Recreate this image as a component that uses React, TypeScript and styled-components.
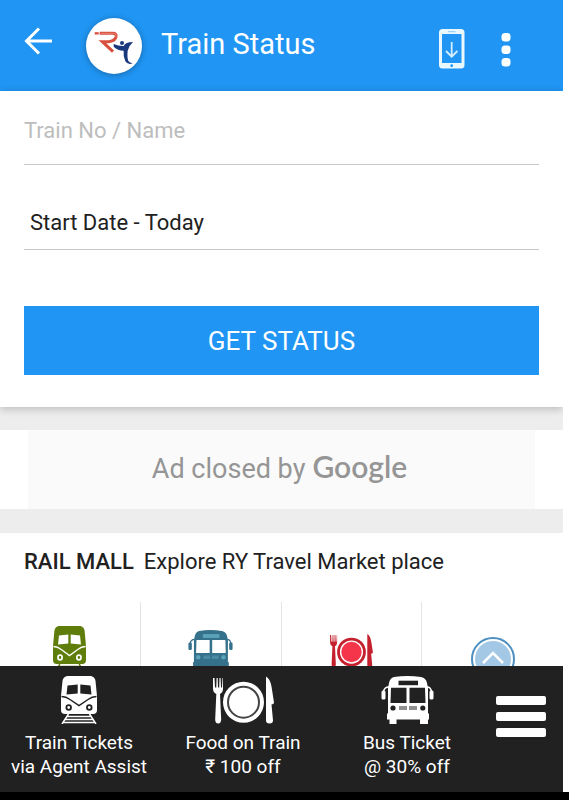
import React from "react";
import styled, { createGlobalStyle } from "styled-components";

const blue = "#2095f3";
const dark = "#212121";

const GlobalStyle = createGlobalStyle`
  *, *::before, *::after { box-sizing: border-box; }
  body { margin: 0; background: #fff; font-family: Roboto, sans-serif; color: #212121; }
  button, input, select { font: inherit; color: inherit; border: 0; margin: 0; padding: 0; background: none; border-radius: 0; }
  svg { display: block; flex: none; }
`;

const Screen = styled.div`
  display: flex;
  flex-direction: column;
  height: 100vh;
  overflow: hidden;
`;

const Viewport = styled.div`
  flex: 1;
  min-height: 0;
  display: flex;
  flex-direction: column;
  margin-right: 6px;
`;

const SystemBar = styled.div`
  height: 8px;
  background: #000;
`;

const Scroller = styled.main`
  position: relative;
  flex: 1;
  min-height: 0;
  overflow: hidden;
  background: #ededed;
`;

const Header = styled.header`
  display: flex;
  align-items: center;
  height: 91px;
  padding: 0 52px 0 24px;
  background: ${blue};
  color: #fff;
`;

const BackButton = styled.button`
  padding-bottom: 10px;
`;

const Logo = styled.div`
  width: 56px;
  height: 56px;
  margin: 0 19px 0 34px;
  border-radius: 50%;
  background: #fff;
  box-shadow: 0 1px 6px rgba(0, 0, 0, 0.3);
`;

const Title = styled.h1`
  flex: 1;
  margin: 0;
  padding-bottom: 4px;
  font-size: 29px;
  line-height: 32px;
  font-weight: 400;
`;

const Actions = styled.div`
  display: flex;
  align-items: center;
  gap: 36px;
  padding-top: 6px;
`;

const StatusForm = styled.form`
  position: relative;
  padding: 16px 24px 32px;
  background: #fff;
  box-shadow: 0 2px 8px rgba(0, 0, 0, 0.22);
`;

const TrainInput = styled.input`
  display: block;
  width: 100%;
  height: 58px;
  padding-bottom: 10px;
  border-bottom: 1px solid #c8c8c8;
  font-size: 22px;
  outline: none;
  &::placeholder { color: #bdbdbd; opacity: 1; }
`;

const DateSelect = styled.select`
  display: block;
  appearance: none;
  width: 100%;
  height: 58px;
  margin-top: 27px;
  padding: 4px 6px 0;
  border-bottom: 1px solid #c8c8c8;
  font-size: 22px;
  outline: none;
`;

const SubmitButton = styled.button`
  display: block;
  width: 100%;
  height: 69px;
  margin-top: 56px;
  background: ${blue};
  color: #fff;
  font-size: 26px;
`;

const AdBand = styled.section`
  margin: 23px 0 24px;
  padding: 0 28px;
  background: #fff;
`;

const AdNotice = styled.p`
  display: flex;
  justify-content: center;
  align-items: baseline;
  gap: 7px;
  margin: 0;
  height: 79px;
  padding: 16px 4px 0 0;
  background: #fafafa;
  color: #959595;
  font-size: 27px;
  line-height: 40px;
`;

const Wordmark = styled.span`
  font-family: Lato, sans-serif;
  font-weight: 600;
  font-size: 30px;
`;

const Mall = styled.section`
  height: 240px;
  background: #fff;
`;

const MallHeading = styled.h2`
  display: flex;
  gap: 10px;
  margin: 0;
  padding: 14px 24px 25px;
  font-size: 22px;
  line-height: 30px;
  font-weight: 400;
`;

const MallName = styled.span`
  font-weight: 500;
`;

const MallGrid = styled.div`
  display: grid;
  grid-template-columns: repeat(4, minmax(0, 1fr));
`;

const MallItem = styled.a`
  display: flex;
  justify-content: center;
  height: 130px;
  padding-top: 24px;
  border-right: 1px solid #e4e4e4;
  &:last-child { border-right: 0; }
`;

const MallIcon = styled.span`
  display: flex;
  align-items: center;
  height: 48px;
`;

const ToTopButton = styled.button`
  position: absolute;
  right: 48px;
  bottom: -15px;
`;

const BottomNav = styled.nav`
  display: grid;
  grid-template-columns: repeat(3, minmax(0, 1fr)) 71px;
  column-gap: 6px;
  height: 126px;
  background: ${dark};
  color: #fff;
`;

const NavLink = styled.a`
  display: flex;
  flex-direction: column;
  align-items: center;
  gap: 7px;
  padding-top: 10px;
  color: inherit;
  text-decoration: none;
  text-align: center;
  font-size: 19px;
  line-height: 24px;
  white-space: nowrap;
`;

const MenuButton = styled.button`
  align-self: start;
  padding: 30px 0 0 4px;
`;

type IconProps = { color: string; cut: string; width: number; height: number; accent?: string };

const TrainIcon = ({ color, cut, width, height }: IconProps) => (
  <svg width={width} height={height} viewBox="0 0 36 48" preserveAspectRatio="none" aria-hidden="true">
    <path fill={color} d="M6 0H30Q34 1 34.500 5L36 20V34Q36 38 32 38H4Q0 38 0 34V20L1.500 5Q2 1 6 0Z" />
    <path fill={cut} d="M6.500 9.500 16.700 8.500V17.500L5.500 18.500ZM19.300 8.500 29.500 9.500 30.500 18.500 19.300 17.500Z" />
    <path fill="none" stroke={cut} strokeWidth="1.500" d="M0.500 20.500Q5 20.500 9 23.500L18 29.500L27 23.500Q31 20.500 35.500 20.500" />
    <g fill={color} stroke={cut} strokeWidth="1.800">
      <circle cx="7.700" cy="31.500" r="2.300" />
      <circle cx="28.300" cy="31.500" r="2.300" />
    </g>
    <path fill="none" stroke={color} strokeWidth="1.500" d="M7.500 38 1 48M28.500 38 35 48M6 40.500H30M4.500 43.500H31.500M2.500 46.500H33.500" />
  </svg>
);

const BusIcon = ({ color, cut, width, height, accent }: IconProps) => (
  <svg width={width} height={height} viewBox="0 0 53 48" aria-hidden="true">
    <path fill={color} d="M13 1Q26.500 -1 40 1Q45 2 46 7L47 12V37.500H48V43.500H47V48H39V43.500H15.500V48H8.500V43.500H6V37.500H7V12L8 7Q9 2 13 1Z" />
    <path fill="none" stroke={color} strokeWidth="1.500" d="M8 11Q3 11 2.500 16M46 11Q50 11 50.500 16" />
    <rect fill={color} x="0.500" y="14.500" width="4" height="9" rx="1.500" />
    <rect fill={color} x="48.500" y="14.500" width="4" height="9" rx="1.500" />
    <rect fill={accent ?? cut} x="17.500" y="4.700" width="19.500" height="4.500" />
    <path fill={cut} d="M10 11.700H25.500V27H9.500ZM28.500 11.700H44L44.500 27H28.500Z" />
    <g fill={accent ?? cut}>
      <circle cx="12" cy="32" r="2.600" />
      <circle cx="41.800" cy="32" r="2.600" />
      <path opacity="0.500" d="M18 30H26V34H18ZM28 30H36V34H28Z" />
    </g>
  </svg>
);

const PlateIcon = ({ color, cut, width, height, accent }: IconProps) => (
  <svg width={width} height={height} viewBox="0 0 61 47" aria-hidden="true">
    <path fill={color} d="M0 1.500H1.500L2 11H3.300L3.600 1.500H4.700L5 11H6.200L6.500 1.500H7.600L8 11H9L9.500 1.500H10V12Q10 16 7 17.500L8.200 43Q8 47 5.200 47Q2.200 47 2.200 43L3.300 17.500Q0 16 0 12Z" />
    <circle fill={color} cx="30.500" cy="25.700" r="20.500" />
    <circle fill={accent ?? color} stroke={cut} strokeWidth="2" cx="30.500" cy="25.700" r="15.500" />
    <path fill={color} d="M53 0Q57 2 58.500 10L61 26Q61 28 58.500 28L60 44Q60 47 56.500 47Q53 47 53 44Z" />
  </svg>
);

const BackIcon = () => (
  <svg width="28" height="28" viewBox="0 0 28 28" fill="none" stroke="#fff" strokeWidth="3" aria-hidden="true">
    <path d="M28 14H2.500M15 1.500 2.500 14 15 26.500" />
  </svg>
);

const LogoMark = () => (
  <svg width="56" height="56" viewBox="33 21 168 168" role="img" aria-label="RY">
    <g fill="none" stroke="#d9503f">
      <path strokeWidth="9" d="M74 67H113Q126 67 123 78Q119 90 101 92H82L114 122" />
      <path strokeWidth="7" d="M59 67H71" />
      <path stroke="#ef9a8c" strokeWidth="2" d="M78 67H113Q126 67 123 78" />
    </g>
    <path fill="#19387d" d="M116 99Q132 106 146 105Q151 93 174 93Q161 105 158 119Q156 140 160 150Q164 156 173 157Q159 163 151 151Q144 136 146 119Q128 119 116 107Z" />
    <circle fill="#19387d" cx="141" cy="96" r="6" />
  </svg>
);

const PhoneIcon = () => (
  <svg width="26" height="40" viewBox="0 0 26 40" aria-hidden="true">
    <rect width="25.500" height="39.500" rx="3.500" fill="#e9f8ff" />
    <rect x="3" y="5" width="19.500" height="29" fill={blue} />
    <path d="M9 2.700H16.500" stroke="#8bc8f5" />
    <circle cx="12.700" cy="36.700" r="1.400" fill={blue} />
    <path d="M12.700 13V27.500M7 22 12.700 27.700 18.400 22" fill="none" stroke="#d3efff" strokeWidth="1.800" />
  </svg>
);

const DotsIcon = () => (
  <svg width="10" height="36" viewBox="0 0 10 36" fill="#fff" aria-hidden="true">
    <rect x="0.500" y="2" width="9" height="8.500" rx="3.500" />
    <rect x="0.500" y="14.500" width="9" height="8.500" rx="3.500" />
    <rect x="0.500" y="27" width="9" height="8.500" rx="3.500" />
  </svg>
);

const ToTopIcon = () => (
  <svg width="44" height="44" viewBox="0 0 44 44" aria-hidden="true">
    <circle cx="22" cy="22" r="21" fill="#fff" stroke="#4d8fc0" strokeWidth="2" />
    <circle cx="22" cy="22" r="18" fill="#a3c8e6" />
    <path d="M12 26 22 16 32 26" fill="none" stroke="#fff" strokeWidth="2.500" />
  </svg>
);

const MenuIcon = () => (
  <svg width="50" height="42" viewBox="0 0 50 42" fill="#fff" aria-hidden="true">
    <rect width="50" height="9" rx="2" />
    <rect y="16" width="50" height="9" rx="2" />
    <rect y="32" width="50" height="9" rx="2" />
  </svg>
);

export default function App() {
  return (
    <Screen>
      <GlobalStyle />
      <Viewport>
        <Scroller>
          <Header>
            <BackButton type="button" aria-label="Back"><BackIcon /></BackButton>
            <Logo><LogoMark /></Logo>
            <Title>Train Status</Title>
            <Actions>
              <button type="button" aria-label="Install app"><PhoneIcon /></button>
              <button type="button" aria-label="More options"><DotsIcon /></button>
            </Actions>
          </Header>

          <StatusForm onSubmit={(e) => e.preventDefault()}>
            <TrainInput type="text" aria-label="Train number or name" placeholder="Train No / Name" />
            <DateSelect aria-label="Start date" defaultValue="today">
              <option value="today">Start Date - Today</option>
            </DateSelect>
            <SubmitButton type="submit">GET STATUS</SubmitButton>
          </StatusForm>

          <AdBand>
            <AdNotice>Ad closed by <Wordmark>Google</Wordmark></AdNotice>
          </AdBand>

          <Mall>
            <MallHeading>
              <MallName>RAIL MALL</MallName>
              <span>Explore RY Travel Market place</span>
            </MallHeading>
            <MallGrid>
              <MallItem href="#train" aria-label="Train tickets">
                <MallIcon><TrainIcon color="#5f7d0b" cut="#fff" width={33} height={48} /></MallIcon>
              </MallItem>
              <MallItem href="#bus" aria-label="Bus tickets">
                <MallIcon><BusIcon color="#35718a" cut="#fff" accent="#5ba3b8" width={45} height={41} /></MallIcon>
              </MallItem>
              <MallItem href="#food" aria-label="Food on train">
                <MallIcon><PlateIcon color="#c5202e" cut="#fff" accent="#f5364a" width={43} height={33} /></MallIcon>
              </MallItem>
              <MallItem href="#more" aria-label="More offers" />
            </MallGrid>
          </Mall>

          <ToTopButton type="button" aria-label="Back to top"><ToTopIcon /></ToTopButton>
        </Scroller>

        <BottomNav>
          <NavLink href="#train">
            <TrainIcon color="#fff" cut={dark} width={36} height={48} />
            <span>Train Tickets<br />via Agent Assist</span>
          </NavLink>
          <NavLink href="#food">
            <PlateIcon color="#fff" cut="#444" width={61} height={48} />
            <span>Food on Train<br />₹ 100 off</span>
          </NavLink>
          <NavLink href="#bus">
            <BusIcon color="#fff" cut={dark} width={53} height={48} />
            <span>Bus Ticket<br />@ 30% off</span>
          </NavLink>
          <MenuButton type="button" aria-label="Menu"><MenuIcon /></MenuButton>
        </BottomNav>
      </Viewport>
      <SystemBar />
    </Screen>
  );
}
